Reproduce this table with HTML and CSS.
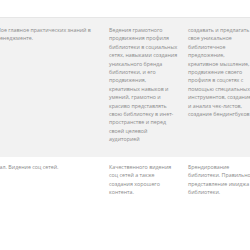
FILE: index.html
```html
<!DOCTYPE html>
<html lang="ru">
<head>
<meta charset="utf-8">
<link rel="stylesheet" href="styles.css">
</head>
<body>
<div class="sheet">
  <table class="grid">
    <colgroup>
      <col class="c1">
      <col class="c2">
      <col class="c3">
    </colgroup>
    <tbody>
      <tr class="row row-odd">
        <td class="cell">Мое главное практических знаний в<br>менеджменте.</td>
        <td class="cell">Ведения грамотного<br>продвижения профиля<br>библиотеки в социальных<br>сетях, навыками создания<br>уникального бренда<br>библиотеки, и его<br>продвижения,<br>креативных навыков и<br>умений, грамотно и<br>красиво представлять<br>свою библиотеку в инет-<br>пространстве и перед<br>своей целевой<br>аудиторией</td>
        <td class="cell">создавать и предлагать<br>свое уникальное<br>библиотечное<br>предложение,<br>креативное мышление,<br>продвижение своего<br>профиля в соцсетях с<br>помощью специальных<br>инструментов, создание<br>и анализ чек-листов,<br>создание бендингбуков</td>
      </tr>
      <tr class="row row-even">
        <td class="cell">Дал. Видение соц сетей.</td>
        <td class="cell">Качественного видения<br>соц сетей а также<br>создания хорошего<br>контента.</td>
        <td class="cell">Брендирование<br>библиотеки. Правильное<br>представление имиджа<br>библиотеки.</td>
      </tr>
    </tbody>
  </table>
</div>
</body>
</html>
```

FILE: styles.css
```css
html, body {
  margin: 0;
  padding: 0;
  background: #ffffff;
  overflow: hidden;
}
body {
  width: 250px;
  height: 250px;
  font-family: "Open Sans", "Noto Sans", sans-serif;
  font-size: 5.3px;
  line-height: 8.4px;
  color: #8a8a8a;
}
.sheet {
  padding-top: 17px;
  margin-left: -12px;
}
.grid {
  border-collapse: collapse;
  table-layout: fixed;
  width: 273px;
}
.c1 { width: 113px; }
.c2 { width: 79px; }
.c3 { width: 81px; }
.cell {
  vertical-align: top;
  padding: 8px 1px 8px 8px;
  text-align: left;
  white-space: nowrap;
}
.row-odd {
  background: #f2f2f2;
  border-top: 1px solid #e6e6e6;
}
.row-odd .cell {
  padding-bottom: 13px;
}
.row-even .cell {
  padding-top: 6px;
}
```
